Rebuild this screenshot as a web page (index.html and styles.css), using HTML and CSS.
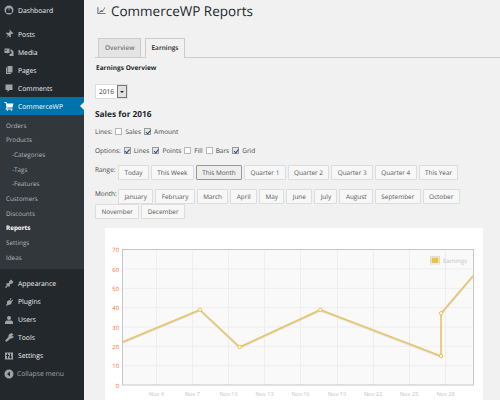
FILE: index.html
```html
<!DOCTYPE html>
<html lang="en">
<head>
    <meta charset="UTF-8">
    <title>CommerceWP Reports</title>
    <link rel="stylesheet" href="styles.css">
</head>
<body>
    <div class="sidebar">
        <ul class="menu">
            <li><svg class="ico" viewBox="0 0 20 20"><path fill-rule="evenodd" d="M10 1a9 9 0 1 0 0 18 9 9 0 0 0 0-18zM4 12a6 6 0 0 1 12 0l-1 4H5zm6-7 1 6-2 0z"/></svg>Dashboard</li>
            <li class="sep"></li>
            <li><svg class="ico" viewBox="0 0 20 20"><path d="M11 1l8 8-2 1-1-1-3 3 1 4-2 1-3-4-6 6 5-7-4-3 1-2 4 1 3-3-1-1z"/></svg>Posts</li>
            <li><svg class="ico" viewBox="0 0 20 20"><path fill-rule="evenodd" d="M1 3h10v9H8l-1 1-2-1H1zm3 2a1.500 1.500 0 1 0 0 3 1.500 1.500 0 0 0 0-3zM13 5h2l4 4v9h-8v-4h2v-1h2V9h-2z"/></svg>Media</li>
            <li><svg class="ico" viewBox="0 0 20 20"><path d="M7 2h10v13H7zM4 5h2v11h8v2H4z"/></svg>Pages</li>
            <li><svg class="ico" viewBox="0 0 20 20"><path d="M3 3h14v11h-6l-4 4v-4H3z"/></svg>Comments</li>
            <li class="current"><svg class="ico" viewBox="0 0 20 20"><path d="M1 2h4l1 3h13l-2 8H7l-1 2h11v2H3l2-4L3.500 4H1z"/><circle cx="7" cy="18" r="1.500"/><circle cx="15" cy="18" r="1.500"/></svg>CommerceWP</li>
        </ul>
        <ul class="submenu">
            <li>Orders</li>
            <li>Products</li>
            <li class="child">-Categories</li>
            <li class="child">-Tags</li>
            <li class="child">-Features</li>
            <li>Customers</li>
            <li>Discounts</li>
            <li class="active">Reports</li>
            <li>Settings</li>
            <li>Ideas</li>
        </ul>
        <ul class="menu lower">
            <li><svg class="ico" viewBox="0 0 20 20"><path d="M14 1l5 5-4 4-1-1-3 3 1 2-2 2-2-2-4 4-2-1 4-5-2-2 2-2 2 1 3-3-1-1z"/></svg>Appearance</li>
            <li><svg class="ico" viewBox="0 0 20 20"><path d="M13 2l2 1-3 4 2 1 3-3 1 2-3 3 1 1-3 4-5 1-3 2-1-2 2-2V9l4-3 1 1z"/></svg>Plugins</li>
            <li><svg class="ico" viewBox="0 0 20 20"><circle cx="10" cy="6" r="4"/><path d="M2 18v-3c0-3 3-4 5-4h6c2 0 5 1 5 4v3z"/></svg>Users</li>
            <li><svg class="ico" viewBox="0 0 20 20"><path d="M13 1c2-1 4 0 6 2l-3 2 1 2 2-1c1 3-2 6-6 5l-7 6c-2 1-4-1-3-3l6-6c-1-3 1-6 4-7z"/></svg>Tools</li>
            <li><svg class="ico" viewBox="0 0 20 20"><path fill-rule="evenodd" d="M2 3h16v14H2zM6 5v3H4v2h2v5h2v-5h2V8H8V5zm6 0v6h-2v2h2v2h2v-2h2v-2h-2V5z"/></svg>Settings</li>
            <li class="collapse"><svg class="ico" viewBox="0 0 20 20"><path fill-rule="evenodd" d="M10 1a9 9 0 1 0 0 18 9 9 0 0 0 0-18zm2 4v10l-6-5z"/></svg>Collapse menu</li>
        </ul>
    </div>

    <div class="content">
        <div class="title-row">
            <svg class="title-ico" viewBox="0 0 20 20"><path d="M1 18h18v-2H3V3H1zM5 14l4-5 3 2 5-8 1 1-6 10-3-2-3 3z"/></svg>
            <h1>CommerceWP Reports</h1>
        </div>

        <div class="tabs">
            <a class="tab">Overview</a>
            <a class="tab tab-on">Earnings</a>
        </div>

        <h3 class="overview">Earnings Overview</h3>

        <div class="select"><span class="select-val">2016</span><span class="select-btn"></span></div>

        <h2 class="sales">Sales for 2016</h2>

        <div class="row">Lines:
            <span class="check"></span>Sales
            <span class="check on"></span>Amount
        </div>
        <div class="row">Options:
            <span class="check on"></span>Lines
            <span class="check on"></span>Points
            <span class="check"></span>Fill
            <span class="check"></span>Bars
            <span class="check on"></span>Grid
        </div>

        <div class="btn-row range">
            <span class="btn-label">Range:</span>
            <a class="btn">Today</a>
            <a class="btn">This Week</a>
            <a class="btn btn-on">This Month</a>
            <a class="btn">Quarter 1</a>
            <a class="btn">Quarter 2</a>
            <a class="btn">Quarter 3</a>
            <a class="btn">Quarter 4</a>
            <a class="btn">This Year</a>
        </div>
        <div class="btn-row month">
            <span class="btn-label">Month:</span>
            <a class="btn">January</a>
            <a class="btn">February</a>
            <a class="btn">March</a>
            <a class="btn">April</a>
            <a class="btn">May</a>
            <a class="btn">June</a>
            <a class="btn">July</a>
            <a class="btn">August</a>
            <a class="btn">September</a>
            <a class="btn">October</a>
            <a class="btn">November</a>
            <a class="btn">December</a>
        </div>

        <div class="card">
            <!-- viewBox is in page pixels, so the numbers read like the plot -->
            <svg class="chart" viewBox="105 228 378 172">
                <rect class="plot" x="122.500" y="249.500" width="351" height="135.500"/>
                <g class="grid">
                    <path d="M123 268.900H473M123 288.300H473M123 307.600H473M123 327H473M123 346.300H473M123 365.700H473"/>
                    <path d="M156.500 250V385M192.500 250V385M228.500 250V385M264.500 250V385M300.500 250V385M337.500 250V385M373.500 250V385M409.500 250V385M445.500 250V385"/>
                </g>
                <rect class="frame" x="122.500" y="249.500" width="351" height="135.500"/>
                <polyline class="shadow" points="123,342.800 200,310.800 239.700,348.100 320.300,310.800 441,357.100 441,314.400 473,277"/>
                <polyline class="line" points="123,341.700 200,309.700 239.700,347 320.300,309.700 441,356 441,313.300 473,275.700"/>
                <g class="dots">
                    <circle cx="200" cy="309.700" r="1.700"/>
                    <circle cx="239.700" cy="347" r="1.700"/>
                    <circle cx="320.300" cy="309.700" r="1.700"/>
                    <circle cx="441" cy="356" r="1.700"/>
                    <circle cx="441" cy="313.300" r="1.700"/>
                </g>
                <g class="y-labels">
                    <text x="119" y="252">70</text>
                    <text x="119" y="271.500">60</text>
                    <text x="119" y="290.500">50</text>
                    <text x="119" y="310">40</text>
                    <text x="119" y="329.500">30</text>
                    <text x="119" y="348.500">20</text>
                    <text x="119" y="368">10</text>
                    <text x="119" y="387.500">0</text>
                </g>
                <g class="x-labels">
                    <text x="156.500" y="395.500">Nov 4</text>
                    <text x="192.500" y="395.500">Nov 7</text>
                    <text x="228.500" y="395.500">Nov 10</text>
                    <text x="264.500" y="395.500">Nov 13</text>
                    <text x="300.500" y="395.500">Nov 16</text>
                    <text x="337" y="395.500">Nov 19</text>
                    <text x="373" y="395.500">Nov 22</text>
                    <text x="409" y="395.500">Nov 25</text>
                    <text x="445.500" y="395.500">Nov 28</text>
                </g>
                <rect class="swatch-box" x="430.500" y="256.500" width="9" height="7.500"/>
                <rect class="swatch" x="431.500" y="257.500" width="7" height="5.500"/>
                <text class="legend" x="443" y="262.500">Earnings</text>
            </svg>
        </div>
    </div>
</body>
</html>
```

FILE: styles.css
```css
html, body {
    height: 400px;
}

body {
    margin: 0;
    display: flex;
    overflow: hidden;
    background-color: #f1f1f1;
    font-family: "Open Sans", sans-serif;
    font-size: 6.8px;
    color: #444;
    text-rendering: geometricPrecision;
}

/* sidebar */
.sidebar {
    width: 84px;
    flex-shrink: 0;
    padding-top: 1px;
    background-color: #23282d;
    color: #eee;
}

ul {
    list-style: none;
    margin: 0;
    padding: 0;
}

.menu li {
    display: flex;
    align-items: center;
    height: 18px;
    padding-left: 4px;
}

.menu .sep {
    height: 6px;
}

.ico {
    width: 10px;
    height: 10px;
    margin-right: 4px;
    fill: #9ea3a8;
}

.menu .current {
    position: relative;
    background-color: #0073aa;
    color: #fff;
}

.current .ico {
    fill: #fff;
}

/* little notch pointing at the content */
.current::after {
    content: "";
    position: absolute;
    right: 0;
    top: 5px;
    border: 4px solid transparent;
    border-right-color: #f1f1f1;
}

.submenu {
    padding: 3.7px 0;
    margin-bottom: 6px;
    background-color: #32373c;
    color: #b4b9be;
}

.submenu li {
    height: 14.67px;
    line-height: 14.67px;
    padding-left: 6px;
    font-size: 6.3px;
}

.submenu .child {
    padding-left: 12px;
}

.submenu .active {
    color: #fff;
    font-weight: 700;
}

.menu .collapse {
    color: #a0a5aa;
}

.collapse .ico {
    margin-right: 3px;
}

/* main column */
.content {
    flex: 1;
    min-width: 0;
    padding-left: 11px;
}

.title-row {
    display: flex;
    align-items: center;
    height: 21px;
    padding-left: 2px;
}

.title-ico {
    width: 9px;
    height: 9px;
    margin-right: 5px;
    fill: #555;
}

h1 {
    margin: 0;
    font-size: 13.5px;
    font-weight: 400;
    color: #23282d;
}

.tabs {
    display: flex;
    gap: 4px;
    height: 20px;
    margin-top: 17px;
    padding-left: 3px;
    border-bottom: 1px solid #ccc;
    box-sizing: border-box;
}

.tab {
    padding: 0 6px;
    line-height: 18px;
    border: 1px solid #ccc;
    border-bottom: 0;
    background-color: #e4e4e4;
    font-size: 6.5px;
    font-weight: 600;
    color: #777;
}

.tab-on {
    height: 19px;
    padding: 0 5px;
    background-color: #f1f1f1;
    color: #222;
}

.overview {
    margin: 5px 0 0 1px;
    line-height: 10px;
    font-size: 6.5px;
    font-weight: 700;
    color: #23282d;
}

.select {
    display: flex;
    width: 33px;
    height: 15px;
    margin-top: 11px;
    box-sizing: border-box;
    border: 1px solid #ddd;
    background-color: #fff;
}

.select-val {
    flex: 1;
    padding-left: 3px;
    line-height: 13px;
    font-size: 6.5px;
    color: #32373c;
}

.select-btn {
    position: relative;
    width: 8px;
    border: 1px solid #777;
    background-color: #e1e1e1;
}

.select-btn::after {
    content: "";
    position: absolute;
    left: 1.5px;
    top: 5px;
    border: 2px solid transparent;
    border-top: 2px solid #222;
}

.sales {
    margin: 9px 0 0;
    line-height: 13px;
    font-size: 8.3px;
    font-weight: 700;
    color: #23282d;
}

.row {
    display: flex;
    align-items: center;
    height: 12px;
    margin-top: 4px;
    font-size: 6.5px;
    white-space: nowrap;
}

.row + .row {
    margin-top: 7px;
}

.check {
    position: relative;
    width: 7px;
    height: 7px;
    margin: 0 3px 0 3px;
    box-sizing: border-box;
    border: 1px solid #b4b9be;
    background-color: #fff;
}

.check.on {
    background-color: #e6e6e6;
    border-color: #999;
}

.check.on::after {
    content: "";
    position: absolute;
    left: 1.5px;
    top: 0;
    width: 1.5px;
    height: 3.5px;
    border: solid #1e4a80;
    border-width: 0 1px 1px 0;
    transform: rotate(40deg);
}

.btn-row {
    width: 370px;
    line-height: 15px;
    font-size: 0;
}

.range {
    margin-top: 9px;
}

.month {
    margin-top: 9px;
}

.btn-label {
    display: inline-block;
    width: 23px;
    line-height: 10px;
    font-size: 6.5px;
    vertical-align: top;
}

.btn {
    display: inline-block;
    height: 15px;
    margin-right: 2px;
    padding: 0 5.4px;
    box-sizing: border-box;
    line-height: 14px;
    vertical-align: top;
    border: 1px solid #ddd;
    border-radius: 1px;
    background-color: #f7f7f7;
    font-size: 6.4px;
    color: #555;
}

.btn-on {
    background-color: #eee;
    border-color: #999;
}

.card {
    width: 378px;
    height: 172px;
    margin: 9px 0 0 10px;
    background-color: #fff;
}

/* chart */
.chart {
    display: block;
    width: 378px;
    height: 172px;
}

.plot {
    fill: #f9f9f9;
}

.grid path {
    fill: none;
    stroke: #eee;
}

.frame {
    fill: none;
    stroke: #c6c6c6;
}

.line, .shadow {
    fill: none;
    stroke-linejoin: round;
}

.line {
    stroke: #e8c566;
    stroke-width: 1.5;
}

.shadow {
    stroke: #ddd;
    stroke-width: 1.5;
}

.dots circle {
    fill: #fff;
    stroke: #edc240;
    stroke-width: 1;
}

.y-labels text {
    fill: #ff6a33;
    font-size: 5.8px;
    text-anchor: end;
}

.x-labels text {
    fill: #c4c4c4;
    font-size: 5.6px;
    text-anchor: middle;
}

.swatch-box {
    fill: #fff;
    stroke: #ddd;
}

.swatch {
    fill: #edc240;
}

.legend {
    fill: #c4c4c4;
    font-size: 6px;
}
```
